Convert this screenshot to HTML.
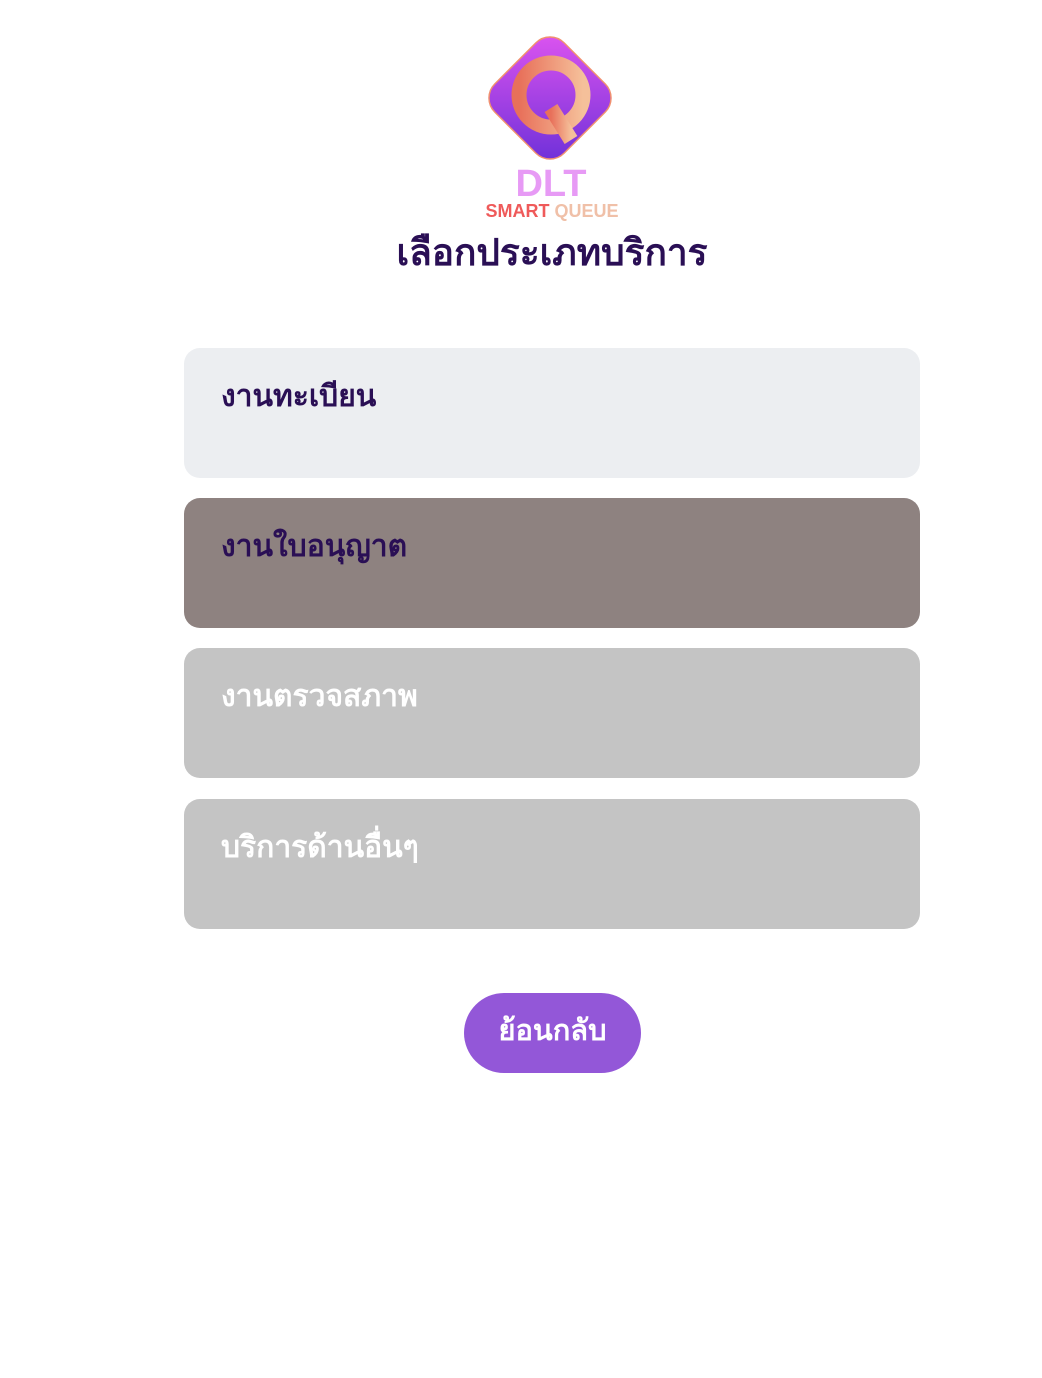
<!DOCTYPE html>
<html><head><meta charset="utf-8"><style>
body{margin:0;width:1042px;height:1378px;background:#fff;font-family:"Liberation Sans","Noto Sans CJK SC",sans-serif;position:relative}
.card{position:absolute;left:184px;width:736px;height:130px;border-radius:16px;box-sizing:border-box;padding:25px 37px;font-size:30px;font-weight:bold}
h1{position:absolute;top:223px;left:31px;width:1042px;text-align:center;margin:0;font-size:37px;color:#2a0f55;font-weight:bold}
.btn{position:absolute;left:464px;top:993px;width:177px;height:80px;border-radius:40px;background:#9357d8;color:#fff;font-size:29px;font-weight:bold;text-align:center;line-height:76px}
</style></head><body>
<svg style="position:absolute;left:477px;top:28px" width="150" height="195" viewBox="0 0 150 195">
<defs><linearGradient id="g" x1="0" y1="0" x2="1" y2="1"><stop offset="0" stop-color="#e055f0"/><stop offset="1" stop-color="#6a2fd8"/></linearGradient>
<linearGradient id="q" x1="0" x2="1"><stop offset="0" stop-color="#e8705a"/><stop offset="1" stop-color="#f5c09a"/></linearGradient></defs>
<rect x="24" y="21" width="98" height="98" rx="20" transform="rotate(45 73 70)" fill="url(#g)" stroke="#f09070" stroke-width="1.5"/>
<circle cx="74" cy="67" r="32" fill="none" stroke="url(#q)" stroke-width="15"/>
<path d="M74 80 L94 112" stroke="url(#q)" stroke-width="15"/>
<text x="74" y="168" text-anchor="middle" font-size="38" font-weight="bold" fill="#e79af5" font-family="Liberation Sans">DLT</text>
<text x="75" y="189" text-anchor="middle" font-size="18" font-weight="bold" fill="#ef5a5a" font-family="Liberation Sans">SMART <tspan fill="#f0c0a8">QUEUE</tspan></text>
</svg>
<h1>เลือกประเภทบริการ</h1>
<div class="card" style="top:348px;background:#eceef1;color:#2a0f55">งานทะเบียน</div>
<div class="card" style="top:498px;background:#8e8280;color:#2a0f55">งานใบอนุญาต</div>
<div class="card" style="top:648px;background:#c4c4c4;color:#fff">งานตรวจสภาพ</div>
<div class="card" style="top:799px;background:#c4c4c4;color:#fff">บริการด้านอื่นๆ</div>
<div class="btn">ย้อนกลับ</div>
</body></html>
